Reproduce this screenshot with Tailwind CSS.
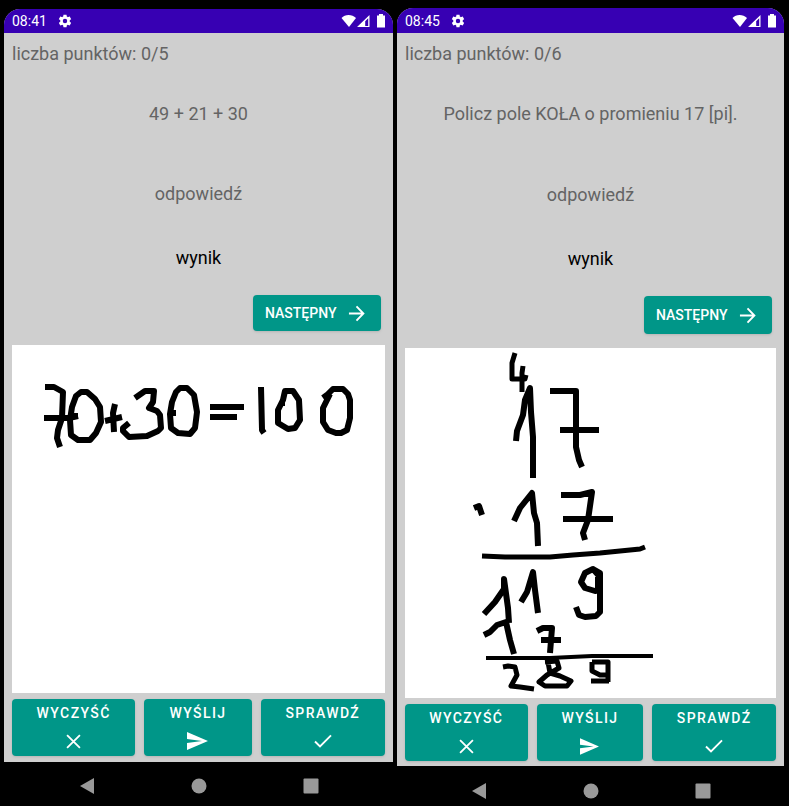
<!DOCTYPE html>
<html lang="pl">
<head>
<meta charset="utf-8">
<meta name="viewport" content="width=device-width, initial-scale=1">
<title>Liczba punktów</title>
<script src="https://cdn.jsdelivr.net/npm/@tailwindcss/browser@4"></script>
</head>
<body class="bg-black font-['Roboto',sans-serif]">
<svg class="hidden">
  <symbol id="gear" viewBox="1 1 22 22"><path fill="currentColor" d="M19.4 13c.1-.3.1-.7.1-1s0-.7-.1-1l2.1-1.600c.2-.2.3-.4.1-.6l-2-3.500c-.1-.2-.4-.3-.6-.2l-2.500 1c-.5-.4-1.100-.7-1.700-1L14.500 2.400c0-.2-.2-.4-.5-.4h-4c-.3 0-.5.2-.5.4L9.200 5.100c-.6.2-1.200.6-1.700 1l-2.500-1c-.2-.1-.5 0-.6.2l-2 3.500c-.1.2-.1.4.1.6L4.600 11c0 .3-.1.7-.1 1s0 .7.1 1l-2.100 1.600c-.2.2-.2.400-.1.600l2 3.500c.1.200.4.300.6.200l2.500-1c.5.400 1.100.700 1.700 1l.3 2.700c0 .2.2.4.5.4h4c.3 0 .5-.2.5-.4l.3-2.700c.6-.2 1.200-.6 1.700-1l2.500 1c.2.100.5 0 .6-.2l2-3.500c.1-.2.100-.4-.1-.6zM12 15.500a3.500 3.500 0 1 1 0-7 3.500 3.500 0 0 1 0 7z"/></symbol>
  <symbol id="status" viewBox="0 0 44 14"><path fill="currentColor" d="M.5 4C4 0 11 0 15 4L8 13z"/><path fill="currentColor" fill-rule="evenodd" d="M28.500 1v12H16zM27.200 4.200l-3 3V12h3z"/><path fill="currentColor" d="M38 0h4v1.500h2V13.500h-8V1.500h2z"/></symbol>
  <symbol id="arrow" viewBox="0 0 18 18"><path fill="none" stroke="currentColor" stroke-width="2" d="M1 9h15M9 1.500 16.300 9 9 16.500"/></symbol>
  <symbol id="cross" viewBox="0 0 14 14"><path fill="none" stroke="currentColor" stroke-width="1.700" d="m1 1 12 12M13 1 1 13"/></symbol>
  <symbol id="send" viewBox="0 0 21 18"><path fill="currentColor" d="M0 0 21 9 0 18v-7l15-2L0 7z"/></symbol>
  <symbol id="check" viewBox="0 0 18 14"><path fill="none" stroke="currentColor" stroke-width="1.900" d="m1 7.500 5 5L17 1.300"/></symbol>
  <symbol id="nav-back" viewBox="0 0 14 16"><path fill="currentColor" d="M14 0v16L0 8z"/></symbol>
  <symbol id="nav-home" viewBox="0 0 16 16"><circle cx="8" cy="8" r="7.500" fill="currentColor"/></symbol>
  <symbol id="nav-recent" viewBox="0 0 16 16"><rect x=".5" y=".5" width="15" height="15" rx="1" fill="currentColor"/></symbol>
</svg>
<main class="grid grid-cols-[389fr_387fr] gap-1 pl-1 pr-[5px]">
  <section class="pt-[9px]">
    <div class="overflow-hidden rounded-t-2xl bg-[#cfcfcf]">
      <header class="flex h-6 items-center bg-[#3700b3] pl-2 pr-2 text-sm text-white">
        <span>08:41</span>
        <svg class="ml-[11px] h-[14px] w-[14px]"><use href="#gear"/></svg>
        <svg class="ml-auto h-[14px] w-11"><use href="#status"/></svg>
      </header>
      <div class="px-2 pb-[6px] pt-[9px] text-lg leading-6 text-[#646464]">
        <p>liczba punktów: 0/5</p>
        <p class="mt-9 text-center">49 + 21 + 30</p>
        <p class="mt-14 text-center">odpowiedź</p>
        <p class="mt-10 text-center text-black">wynik</p>
        <div class="mt-[25px] flex justify-end pr-1">
          <button class="flex h-9 w-32 items-center justify-between rounded-sm bg-[#009688] pl-3 pr-4 text-sm font-medium text-white shadow-sm">NASTĘPNY<svg class="h-[17px] w-[17px]"><use href="#arrow"/></svg></button>
        </div>
        <svg class="mt-[14px] block h-auto w-full bg-white" viewBox="12 345 373 348" role="img" aria-label="70+30=100" fill="none" stroke="#000" stroke-width="6" stroke-linejoin="round">
          <path d="M45 387H54L63 392 62 418 58 430 57 438 60 447M44 418H69L78 416"/>
          <path d="M76 396 81 392H87L95 399 100 407 101 422 96 433 90 440 78 440 71 435 70 420 72 407ZM72 416H78"/>
          <path d="M115 404 113 413 114 432M105 421 122 417"/>
          <path d="M135 398 145 391 154 391 153 402 149 408 157 411 160 415 161 428 158 431 147 436 129 437 123 431 123 428 129 423"/>
          <path d="M176 392 180 388H187L194 395 197 412 195 428 190 434 178 433 171 428 170 414 172 402ZM171 413H176"/>
          <path d="M210 407H244M210 417H237M261 387 262 430 264 433"/>
          <path d="M285 391H293L299 400 300 420 295 428 288 429 278 423 278 410 283 400ZM281 403H285"/>
          <path d="M323 398 327 395 333 389H343L348 394 350 400V418L347 430 341 433H336L328 430 323 422V408L330 394"/>
        </svg>
        <div class="mt-[6px] grid grid-cols-[123fr_107fr_124fr] gap-[9px] text-sm font-medium tracking-widest text-white">
          <button class="flex h-[57px] flex-col items-center justify-start rounded-sm bg-[#009688] pt-1 shadow-sm"><span class="leading-5">WYCZYŚĆ</span><span class="mt-1 flex h-7 items-center"><svg class="h-[15px] w-[15px]"><use href="#cross"/></svg></span></button>
          <button class="flex h-[57px] flex-col items-center justify-start rounded-sm bg-[#009688] pt-1 shadow-sm"><span class="leading-5">WYŚLIJ</span><span class="mt-1 flex h-7 items-center"><svg class="h-[18px] w-[21px]"><use href="#send"/></svg></span></button>
          <button class="flex h-[57px] flex-col items-center justify-start rounded-sm bg-[#009688] pt-1 shadow-sm"><span class="leading-5">SPRAWDŹ</span><span class="mt-1 flex h-7 items-center"><svg class="h-[14px] w-[18px]"><use href="#check"/></svg></span></button>
        </div>
      </div>
    </div>
    <nav class="flex justify-center gap-24 pt-4 text-[#999]">
      <button aria-label="Wstecz"><svg class="h-4 w-4"><use href="#nav-back"/></svg></button>
      <button aria-label="Ekran główny"><svg class="h-4 w-4"><use href="#nav-home"/></svg></button>
      <button aria-label="Ostatnie"><svg class="h-4 w-4"><use href="#nav-recent"/></svg></button>
    </nav>
  </section>

  <section class="pt-2">
    <div class="overflow-hidden rounded-t-2xl bg-[#cfcfcf]">
      <header class="flex h-[25px] items-center bg-[#3700b3] pl-2 pr-2 text-sm text-white">
        <span>08:45</span>
        <svg class="ml-[11px] h-[14px] w-[14px]"><use href="#gear"/></svg>
        <svg class="ml-auto h-[14px] w-11"><use href="#status"/></svg>
      </header>
      <div class="px-2 pb-[5px] pt-[9px] text-lg leading-6 text-[#646464]">
        <p>liczba punktów: 0/6</p>
        <p class="mt-9 text-center">Policz pole KOŁA o promieniu 17 [pi].</p>
        <p class="mt-[57px] text-center">odpowiedź</p>
        <p class="mt-10 text-center text-black">wynik</p>
        <div class="mt-[25px] flex justify-end pr-1">
          <button class="flex h-[38px] w-32 items-center justify-between rounded-sm bg-[#009688] pl-3 pr-4 text-sm font-medium text-white shadow-sm">NASTĘPNY<svg class="h-[17px] w-[17px]"><use href="#arrow"/></svg></button>
        </div>
        <svg class="mt-[14px] block h-auto w-full bg-white" viewBox="405 348 371 350" role="img" aria-label="17 · 17 = 289" fill="none" stroke="#000" stroke-width="6" stroke-linejoin="round">
          <path d="M515 353 512 363V379H525L526 375M523 366 522 373V392" stroke-width="5"/>
          <path d="M516 441 517 431 523 415 525 400 530 388 531 412 533 437V478M550 391H576V447L579 460 582 467M560 430H599"/>
          <path d="M474 508 479 506 482 515M514 521 520 508 532 493 534 513 537 523 538 546M561 495H580L592 492 588 520 583 533 585 540M563 519H613"/>
          <path stroke-width="5" d="M482 556 505 557H550L573 555 600 553 640 549 645 547"/>
          <path d="M484 614 495 602 504 589V579L508 608 509 623M521 602 527 592 533 572 535 590 538 613"/>
          <path d="M600 577 593 569 585 573 581 582 585 588 595 591 600 590M593 569 600 573V612L596 616 585 617 579 615 576 607M598 577V589"/>
          <path d="M484 635 490 632 497 625 506 622 510 640 514 654M537 631 543 628H552L550 653M541 640H561"/>
          <path stroke-width="4" d="M486 658H550L592 656H653"/>
          <path d="M503 667 508 666 515 667 517 675 511 686 520 687 534 689M545 662 557 661 559 668 547 675 539 682 545 686H567L571 681 560 676 550 673 548 662" stroke-width="5"/>
          <path d="M592 662H608V682M591 681H609M592 662V671L600 675H608" stroke-width="5"/>
        </svg>
        <div class="mt-[6px] grid grid-cols-[123fr_107fr_124fr] gap-[9px] text-sm font-medium tracking-widest text-white">
          <button class="flex h-[57px] flex-col items-center justify-start rounded-sm bg-[#009688] pt-1 shadow-sm"><span class="leading-5">WYCZYŚĆ</span><span class="mt-1 flex h-7 items-center"><svg class="h-[15px] w-[15px]"><use href="#cross"/></svg></span></button>
          <button class="flex h-[57px] flex-col items-center justify-start rounded-sm bg-[#009688] pt-1 shadow-sm"><span class="leading-5">WYŚLIJ</span><span class="mt-1 flex h-7 items-center"><svg class="h-[17px] w-[19px]"><use href="#send"/></svg></span></button>
          <button class="flex h-[57px] flex-col items-center justify-start rounded-sm bg-[#009688] pt-1 shadow-sm"><span class="leading-5">SPRAWDŹ</span><span class="mt-1 flex h-7 items-center"><svg class="h-[14px] w-[18px]"><use href="#check"/></svg></span></button>
        </div>
      </div>
    </div>
    <nav class="flex justify-center gap-24 pt-[17px] text-[#999]">
      <button aria-label="Wstecz"><svg class="h-4 w-4"><use href="#nav-back"/></svg></button>
      <button aria-label="Ekran główny"><svg class="h-4 w-4"><use href="#nav-home"/></svg></button>
      <button aria-label="Ostatnie"><svg class="h-4 w-4"><use href="#nav-recent"/></svg></button>
    </nav>
  </section>
</main>
</body>
</html>
